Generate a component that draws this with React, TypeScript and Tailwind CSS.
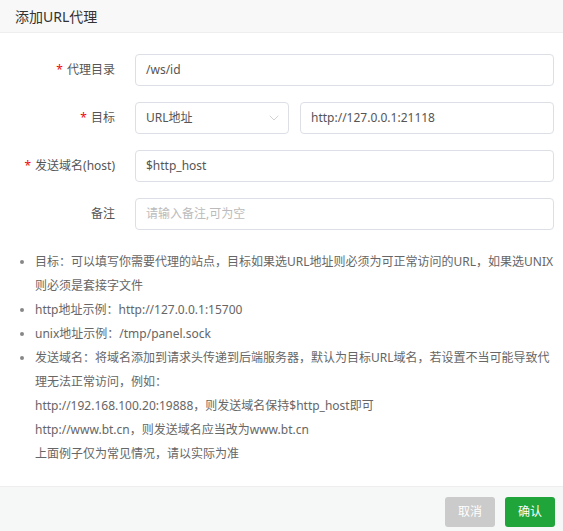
import { ChevronDown } from 'lucide-react';

const font = { fontFamily: '"Noto Sans", "Noto Sans CJK SC", sans-serif' };

function Label({ text, required }: { text: string; required?: boolean }) {
  return (
    <div className="w-[116px] shrink-0 pr-[1px] text-right text-[12px] text-[#555] leading-[32px]">
      {required && <span className="text-[#ef0808] mr-[4px]">*</span>}
      {text}
    </div>
  );
}

function Field({ value, placeholder, className = '' }: { value?: string; placeholder?: string; className?: string }) {
  return (
    <div
      className={`h-[32px] border border-[#dcdfe6] rounded-[4px] px-[10px] flex items-center text-[12px] ${
        value ? 'text-[#555]' : 'text-[#bbb]'
      } ${className}`}
    >
      {value || placeholder}
    </div>
  );
}

function Bullet({ lines, dot = true }: { lines: string[]; dot?: boolean }) {
  return (
    <li className="relative pl-[35px]">
      {dot && <span className="absolute left-[20px] top-[10px] w-[4px] h-[4px] rounded-full bg-[#888]" />}
      {lines.map((l, i) => (
        <div key={i} className="whitespace-nowrap">
          {l}
        </div>
      ))}
    </li>
  );
}

export default function App() {
  return (
    <div style={font} className="w-[563px] h-[531px] flex flex-col bg-white overflow-hidden">
      <div className="h-[33px] shrink-0 bg-[#f8f8f8] border-b border-[#eee] px-[15px] flex items-center text-[14px] text-[#333]">
        添加URL代理
      </div>

      <div className="flex-1 pt-[21px]">
        <div className="flex flex-col gap-[16px] pr-[9px]">
          <div className="flex gap-[19px]">
            <Label text="代理目录" required />
            <Field value="/ws/id" className="flex-1" />
          </div>
          <div className="flex gap-[19px]">
            <Label text="目标" required />
            <div className="flex-1 flex gap-[11px]">
              <div className="w-[154px] h-[32px] border border-[#dcdfe6] rounded-[4px] pl-[10px] pr-[6px] flex items-center justify-between text-[12px] text-[#555]">
                URL地址
                <ChevronDown size={16} strokeWidth={1} className="text-[#bbb]" />
              </div>
              <Field value="http://127.0.0.1:21118" className="flex-1" />
            </div>
          </div>
          <div className="flex gap-[19px]">
            <Label text="发送域名(host)" required />
            <Field value="$http_host" className="flex-1" />
          </div>
          <div className="flex gap-[19px]">
            <Label text="备注" />
            <Field placeholder="请输入备注,可为空" className="flex-1" />
          </div>
        </div>

        <ul className="mt-[20px] text-[12px] leading-[24px] text-[#666]">
          <Bullet
            lines={[
              '目标：可以填写你需要代理的站点，目标如果选URL地址则必须为可正常访问的URL，如果选UNIX',
              '则必须是套接字文件',
            ]}
          />
          <Bullet lines={['http地址示例：http://127.0.0.1:15700']} />
          <Bullet lines={['unix地址示例：/tmp/panel.sock']} />
          <Bullet
            lines={[
              '发送域名：将域名添加到请求头传递到后端服务器，默认为目标URL域名，若设置不当可能导致代',
              '理无法正常访问，例如：',
              'http://192.168.100.20:19888，则发送域名保持$http_host即可',
              'http://www.bt.cn，则发送域名应当改为www.bt.cn',
              '上面例子仅为常见情况，请以实际为准',
            ]}
          />
        </ul>
      </div>

      <div className="h-[45px] shrink-0 bg-[#f6f8f8] border-t border-[#eee] pt-[10px] pr-[8px] flex justify-end items-start gap-[10px]">
        <button className="w-[50px] h-[30px] rounded-[3px] bg-[#cbcbcb] text-white text-[12px]">取消</button>
        <button className="w-[50px] h-[30px] rounded-[3px] bg-[#20a53a] text-white text-[12px]">确认</button>
      </div>
    </div>
  );
}
